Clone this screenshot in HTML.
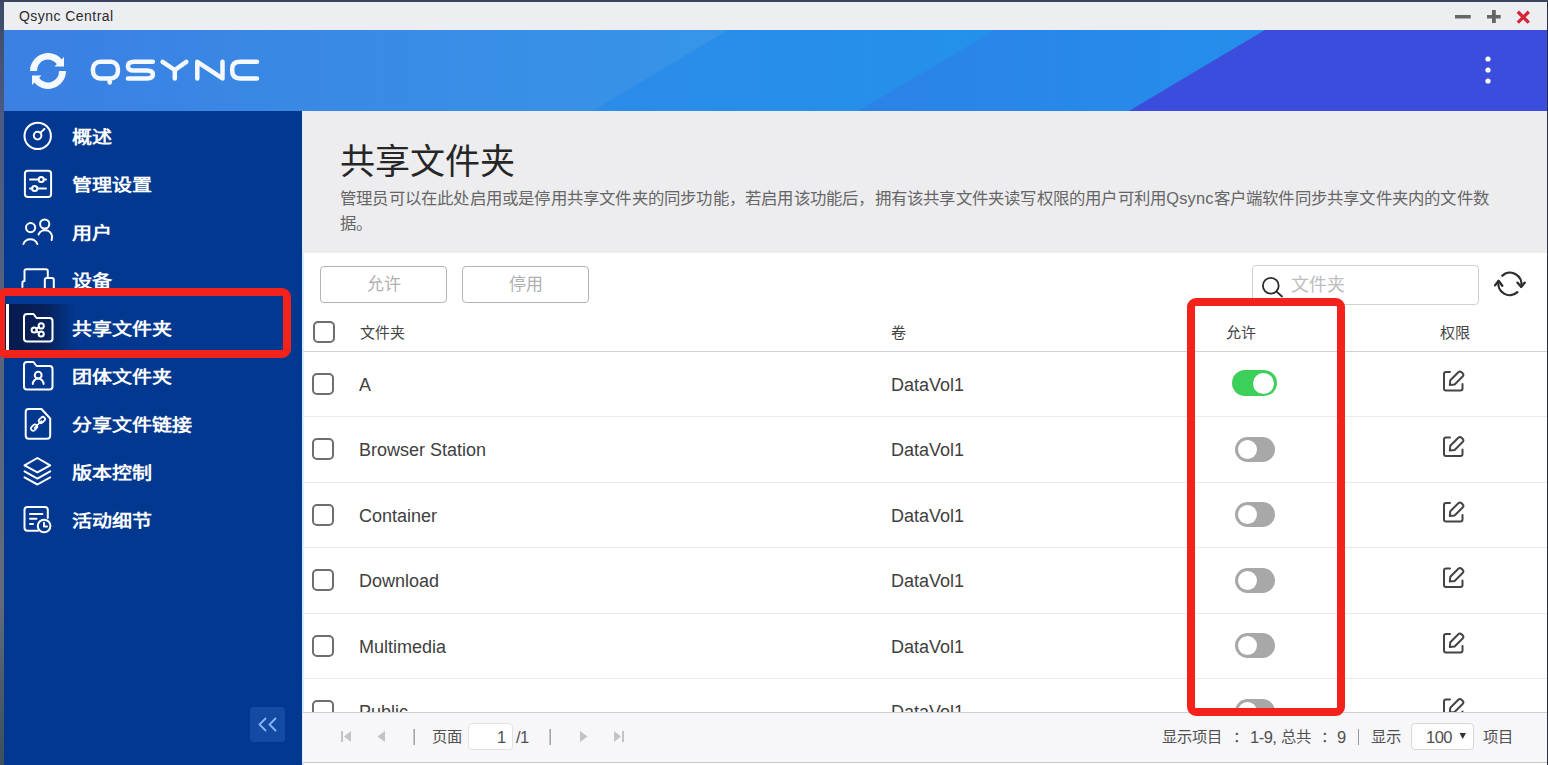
<!DOCTYPE html>
<html lang="zh-CN"><head><meta charset="utf-8">
<style>
*{margin:0;padding:0;box-sizing:border-box}
html,body{width:1548px;height:765px;overflow:hidden;background:#404a68;font-family:"Liberation Sans",sans-serif}
.a{position:absolute}
#titlebar{left:4px;top:2px;width:1543px;height:28px;background:#eceef2}
#header{left:4px;top:30px;width:1543px;height:81px;overflow:hidden}
#sidebar{left:4px;top:111px;width:298px;height:654px;background:#02388f}
#content{left:302px;top:111px;width:1245px;height:654px;background:#fff}
#phead{left:303px;top:111px;width:1244px;height:142px;background:#ededef}
.lbl{position:absolute;left:72px;color:#fff;font-weight:bold;font-size:20px;line-height:24px;white-space:nowrap;transform:scaleY(.87);transform-origin:0 20px}
.ico{position:absolute;left:20px}
.th{position:absolute;font-size:15px;color:#444;line-height:18px;white-space:nowrap}
.cell{position:absolute;font-size:18px;color:#404040;line-height:22px;white-space:nowrap;margin-top:1px}
.cb{position:absolute;left:312px;width:22px;height:22px;border:2px solid #6e6e6e;border-radius:5px;background:#fff}
.tog{position:absolute;left:1235px;width:40px;height:25px;border-radius:13px;background:#a8a8a8}
.tog::after{content:"";position:absolute;left:3px;top:3px;width:19px;height:19px;border-radius:50%;background:#fff}
.tog.on{left:1232px;width:45px;height:26px;background:#3ccf5a}
.tog.on::after{left:21px;top:2.5px;width:21px;height:21px}
.rl{position:absolute;left:303px;width:1244px;height:1px;background:#ebebeb}
.ed{position:absolute;left:1441px}
.ft{position:absolute;font-size:15.3px;color:#505050;line-height:18px;white-space:nowrap}
</style></head>
<body>
<div class="a" style="left:0;top:0;width:4px;height:765px;background:linear-gradient(180deg,#3d4a66 0%,#4a5a82 15%,#58627c 45%,#646b7d 78%,#4a5868 92%,#3d4f5a 100%)"></div>
<div id="titlebar" class="a"></div>
<div class="a" style="left:19px;top:7.5px;font-size:14px;letter-spacing:0.45px;color:#2a2a2a;line-height:17px">Qsync Central</div>
<svg class="a" style="left:1450px;top:6px" width="90" height="20" viewBox="0 0 90 20">
  <rect x="5" y="9" width="15.7" height="3.5" fill="#666"/>
  <rect x="37" y="9" width="13.7" height="3.5" fill="#666"/>
  <rect x="42" y="4" width="3.8" height="13" fill="#666"/>
  <path d="M67.8,5.8 L78.8,16.6 M78.8,5.8 L67.8,16.6" stroke="#d42636" stroke-width="3.3"/>
</svg>

<!-- header -->
<svg id="header" class="a" width="1543" height="81" viewBox="4 30 1543 81">
  <defs>
    <linearGradient id="g1" x1="4" y1="0" x2="720" y2="0" gradientUnits="userSpaceOnUse"><stop offset="0" stop-color="#3b80e2"/><stop offset="1" stop-color="#3795e8"/></linearGradient>
    <linearGradient id="g2" x1="600" y1="0" x2="990" y2="0" gradientUnits="userSpaceOnUse"><stop offset="0" stop-color="#2b8ce9"/><stop offset="1" stop-color="#2391ea"/></linearGradient>
    <linearGradient id="g3" x1="860" y1="0" x2="1260" y2="0" gradientUnits="userSpaceOnUse"><stop offset="0" stop-color="#2c82e7"/><stop offset="1" stop-color="#258eea"/></linearGradient>
  </defs>
  <rect x="4" y="30" width="1543" height="81" fill="url(#g1)"/>
  <polygon points="728,30 1547,30 1547,111 592,111" fill="url(#g2)"/>
  <polygon points="995,30 1547,30 1547,111 858,111" fill="url(#g3)"/>
  <polygon points="1265,30 1547,30 1547,111 1129,111" fill="#3c4cdc"/>
  <!-- sync icon -->
  <g fill="#f4f9ff">
    <path d="M30,71 A18,18 0 0 1 62.7,60.7 L57.2,64.5 A11,11 0 0 0 37,71 Z"/>
    <polygon points="64,57 64,66.6 54.5,66.6"/>
    <path d="M66,71 A18,18 0 0 1 33.3,81.3 L38.8,77.5 A11,11 0 0 0 59,71 Z"/>
    <polygon points="32,85 32,75.4 41.5,75.4"/>
  </g>
  <g fill="none" stroke="#f4f9ff" stroke-width="4.5" stroke-linecap="round" stroke-linejoin="round">
    <rect x="93" y="61.8" width="24.9" height="16.6" rx="7"/>
    <path d="M109.7,80.5 V82.6"/>
    <path d="M152.9,61.8 H134 Q127.9,61.8 127.9,66.2 Q127.9,70.6 134,70.6 H147 Q152.9,70.6 152.9,74.5 Q152.9,78.4 147,78.4 H127.9"/>
    <path d="M162.6,61.8 L174.8,70 L186.3,61.8 M174.8,70 V78.4"/>
    <path d="M197.3,78.4 V61.8 L222.5,78.4 V61.8"/>
    <path d="M257,61.8 H240 Q232.2,61.8 232.2,69 V71 Q232.2,78.4 240,78.4 H257"/>
  </g>
  <g fill="#fff">
    <circle cx="1488" cy="59" r="2.6"/>
    <circle cx="1488" cy="70" r="2.6"/>
    <circle cx="1488" cy="81" r="2.6"/>
  </g>
</svg>

<div id="sidebar" class="a"></div>
<!-- active item -->
<div class="a" style="left:4px;top:304px;width:298px;height:48px;background:linear-gradient(90deg,#061a4c 0%,#08215a 14%,#052d77 19%,#02388f 24%)"></div>
<div class="a" style="left:6px;top:304px;width:3px;height:48px;background:#fff"></div>

<div class="lbl" style="top:124px">概述</div>
<div class="lbl" style="top:172px">管理设置</div>
<div class="lbl" style="top:220px">用户</div>
<div class="lbl" style="top:268px">设备</div>
<div class="lbl" style="top:316px">共享文件夹</div>
<div class="lbl" style="top:364px">团体文件夹</div>
<div class="lbl" style="top:412px">分享文件链接</div>
<div class="lbl" style="top:460px">版本控制</div>
<div class="lbl" style="top:508px">活动细节</div>

<svg class="a" style="left:0;top:111px" width="70" height="440" viewBox="0 111 70 440" fill="none" stroke="#fff" stroke-width="2" stroke-linecap="round" stroke-linejoin="round">
  <!-- overview -->
  <circle cx="37.7" cy="135.9" r="13.2"/>
  <circle cx="37.6" cy="135.6" r="3.8"/>
  <path d="M40.4,132.8 L44.4,129"/>
  <!-- settings -->
  <rect x="24.9" y="170.7" width="26.2" height="26.3" rx="3"/>
  <path d="M30,179.5 H38.6 M43.8,179.5 H46 M30,188.5 H32.2 M37.3,188.5 H46"/>
  <circle cx="41.2" cy="179.5" r="2.6"/>
  <circle cx="34.7" cy="188.5" r="2.6"/>
  <!-- users -->
  <circle cx="30.6" cy="227.6" r="4.6"/>
  <circle cx="44.7" cy="224" r="4.6"/>
  <path d="M23.4,244 A7.4,7.4 0 0 1 37.3,244"/>
  <path d="M38.5,234.5 A7,7 0 0 1 51.6,240"/>
  <!-- devices -->
  <path d="M22.4,287 V283 Q22.4,281 24.5,281 H24.5 V271 Q24.5,269.2 26.5,269.2 H45.8 Q47.8,269.2 47.8,271 V278"/>
  <rect x="44.8" y="278" width="9" height="14" rx="2"/>
  <!-- shared folder -->
  <path d="M24,317 Q24,314 27,314 H33.5 L36.5,318 H49.5 Q52.5,318 52.5,321 V338.5 Q52.5,341.5 49.5,341.5 H27 Q24,341.5 24,338.5 Z"/>
  <circle cx="34.2" cy="330" r="2.6"/>
  <circle cx="41.2" cy="325.9" r="2.6"/>
  <circle cx="41.2" cy="334" r="2.6"/>
  <path d="M36.2,328.8 L39.2,327 M36.2,331.2 L39.2,332.9"/>
  <!-- group folder -->
  <path d="M24,365 Q24,362 27,362 H33.5 L36.5,366 H49.5 Q52.5,366 52.5,369 V386.5 Q52.5,389.5 49.5,389.5 H27 Q24,389.5 24,386.5 Z"/>
  <circle cx="38.2" cy="375.2" r="3.4"/>
  <path d="M32.8,384 A5.4,5.4 0 0 1 43.6,384"/>
  <!-- link file -->
  <path d="M28.5,409 H41.5 L50.2,418.5 V435.5 Q50.2,438.7 47,438.7 H28.8 Q25.7,438.7 25.7,435.5 V412 Q25.7,409 28.5,409 Z"/>
  <path d="M34.5,428 L41.5,421" stroke-width="1.6"/>
  <rect x="30.6" y="425.4" width="7" height="4.4" rx="2.2" transform="rotate(-45 34.1 427.6)" stroke-width="1.8"/>
  <rect x="38.4" y="417.8" width="7" height="4.4" rx="2.2" transform="rotate(-45 41.9 420)" stroke-width="1.8"/>
  <!-- layers -->
  <path d="M37.4,458 L50.2,465.3 L37.4,472.4 L24.5,465.3 Z"/>
  <path d="M24.5,471.3 L37.4,478.6 L50.2,471.3"/>
  <path d="M24.5,477.4 L37.4,484.5 L50.2,477.4"/>
  <!-- activity -->
  <path d="M38,530.8 H27.5 Q24.5,530.8 24.5,527.8 V509.9 Q24.5,506.9 27.5,506.9 H44.8 Q47.8,506.9 47.8,509.9 V518"/>
  <path d="M30,514 H42.4 M30,518.8 H36.5 M30,524 H33"/>
  <circle cx="44.1" cy="526" r="6.3"/>
  <path d="M44,522.8 V526.4 H47"/>
</svg>

<!-- collapse button -->
<div class="a" style="left:250px;top:707px;width:35px;height:35px;border-radius:4px;background:#134aa3"></div>
<svg class="a" style="left:250px;top:707px" width="35" height="35" viewBox="0 0 35 35" fill="none" stroke="#8bb4f5" stroke-width="1.8" stroke-linecap="round">
  <path d="M15.5,11.5 L9.5,17.5 L15.5,23.5 M25.5,11.5 L19.5,17.5 L25.5,23.5"/>
</svg>

<div id="content" class="a"></div>
<div class="a" style="left:302px;top:111px;width:2px;height:654px;background:#d8eefa"></div>
<div id="phead" class="a"></div>
<div class="a" style="left:340px;top:140px;font-size:35.1px;color:#262626;line-height:44px;white-space:nowrap">共享文件夹</div>
<div class="a" style="left:340px;top:186px;font-size:16.4px;letter-spacing:0.2px;color:#666;line-height:25px;white-space:nowrap">管理员可以在此处启用或是停用共享文件夹的同步功能，若启用该功能后，拥有该共享文件夹读写权限的用户可利用Qsync客户端软件同步共享文件夹内的文件数<br>据。</div>

<!-- toolbar -->
<div class="a" style="left:320px;top:266px;width:127px;height:37px;border:1px solid #b4b4b4;border-radius:4px;color:#b0b0b0;font-size:17px;line-height:35px;text-align:center">允许</div>
<div class="a" style="left:462px;top:266px;width:127px;height:37px;border:1px solid #b4b4b4;border-radius:4px;color:#b0b0b0;font-size:17px;line-height:35px;text-align:center">停用</div>
<div class="a" style="left:1252px;top:265px;width:227px;height:40px;border:1px solid #d0d0d0;border-radius:4px;background:#fff"></div>
<svg class="a" style="left:1258px;top:274px" width="30" height="26" viewBox="0 0 30 26" fill="none" stroke="#2a2a2a" stroke-width="1.8" stroke-linecap="round">
  <circle cx="12.8" cy="11.7" r="7.9"/>
  <path d="M18.6,17.6 L24,22.5"/>
</svg>
<div class="a" style="left:1291px;top:274px;font-size:18px;color:#bdbdbd;line-height:22px">文件夹</div>
<svg class="a" style="left:1485px;top:260px" width="50" height="50" viewBox="1485 260 50 50" fill="none" stroke="#2e2e2e" stroke-width="2.3" stroke-linecap="round" stroke-linejoin="round">
  <path d="M1502.3,275.7 A11.4,11.4 0 0 1 1521.2,286.5"/>
  <path d="M1517.4,282.6 L1521.2,287 L1524.8,282.6"/>
  <path d="M1517.4,292.2 A11.4,11.4 0 0 1 1498.6,281.3"/>
  <path d="M1495,285.4 L1498.6,280.8 L1502.3,285.8"/>
</svg>

<!-- table header -->
<div class="cb" style="left:313px;top:321px"></div>
<div class="th" style="left:360px;top:324px">文件夹</div>
<div class="th" style="left:891px;top:324px">卷</div>
<div class="th" style="left:1226px;top:324px">允许</div>
<div class="th" style="left:1440px;top:324px">权限</div>
<div class="a" style="left:303px;top:351px;width:1244px;height:1px;background:#d3d3d3"></div>

<!-- rows -->
<div class="rl" style="top:416px"></div>
<div class="rl" style="top:482px"></div>
<div class="rl" style="top:547px"></div>
<div class="rl" style="top:613px"></div>
<div class="rl" style="top:678px"></div>

<div class="cb" style="top:373px"></div>
<div class="cb" style="top:438px"></div>
<div class="cb" style="top:504px"></div>
<div class="cb" style="top:569px"></div>
<div class="cb" style="top:635px"></div>
<div class="cb" style="top:700px"></div>

<div class="cell" style="left:359px;top:373px">A</div>
<div class="cell" style="left:359px;top:438px">Browser Station</div>
<div class="cell" style="left:359px;top:504px">Container</div>
<div class="cell" style="left:359px;top:569px">Download</div>
<div class="cell" style="left:359px;top:635px">Multimedia</div>
<div class="cell" style="left:359px;top:700px">Public</div>

<div class="cell" style="left:891px;top:373px">DataVol1</div>
<div class="cell" style="left:891px;top:438px">DataVol1</div>
<div class="cell" style="left:891px;top:504px">DataVol1</div>
<div class="cell" style="left:891px;top:569px">DataVol1</div>
<div class="cell" style="left:891px;top:635px">DataVol1</div>
<div class="cell" style="left:891px;top:700px">DataVol1</div>

<div class="tog on" style="top:370px"></div>
<div class="tog" style="top:437px"></div>
<div class="tog" style="top:502px"></div>
<div class="tog" style="top:568px"></div>
<div class="tog" style="top:633px"></div>
<div class="tog" style="top:699px"></div>

<svg class="a" style="left:1436px;top:364px" width="34" height="350" viewBox="1436 364 34 350" fill="none" stroke="#444" stroke-width="2" stroke-linecap="round" stroke-linejoin="round">
  <g id="ed1">
    <path d="M1450,372 H1446 Q1444,372 1444,374 V388.5 Q1444,390.5 1446,390.5 H1460.5 Q1462.5,390.5 1462.5,388.5 V384"/>
    <path d="M1449.8,385 L1450.3,380.2 L1458.3,372.2 Q1459.9,370.6 1461.5,372.2 L1462.6,373.3 Q1464.2,374.9 1462.6,376.5 L1454.6,384.5 Z"/>
  </g>
  <use href="#ed1" y="65.5"/>
  <use href="#ed1" y="131"/>
  <use href="#ed1" y="196.5"/>
  <use href="#ed1" y="262"/>
  <use href="#ed1" y="327.5"/>
</svg>

<!-- footer -->
<div class="a" style="left:303px;top:712px;width:1244px;height:51px;background:#f7f7f9;border-top:1px solid #cfcfcf;border-bottom:1px solid #c8c8c8"></div>
<svg class="a" style="left:330px;top:720px" width="310" height="35" viewBox="330 720 310 35" fill="#c3c3c3">
  <rect x="341" y="731" width="2" height="11"/>
  <polygon points="351,731 351,742 344,736.5"/>
  <polygon points="385,731 385,742 377.5,736.5"/>
  <polygon points="580,731 580,742 587.5,736.5"/>
  <polygon points="614,731 614,742 621,736.5"/>
  <rect x="622" y="731" width="2" height="11"/>
  <rect x="413.5" y="729" width="1.4" height="16" fill="#999"/>
  <rect x="549.5" y="729" width="1.4" height="16" fill="#999"/>
</svg>
<div class="ft" style="left:432px;top:728px">页面</div>
<div class="a" style="left:468px;top:723px;width:45px;height:27px;border:1px solid #e3e3e3;border-radius:4px;background:#fff"></div>
<div class="ft" style="left:497px;top:728px;font-size:16.5px;letter-spacing:-0.5px">1</div>
<div class="ft" style="left:516px;top:728px;font-size:16.5px;letter-spacing:-0.5px">/1</div>

<div class="ft" style="left:1162px;top:728px">显示项目</div>
<div class="ft" style="left:1233px;top:728px">：</div>
<div class="ft" style="left:1250px;top:728px;font-size:16.5px;letter-spacing:-0.5px">1-9,</div>
<div class="ft" style="left:1281px;top:728px">总共</div>
<div class="ft" style="left:1321px;top:728px">：</div>
<div class="ft" style="left:1337px;top:728px;font-size:16.5px;letter-spacing:-0.5px">9</div>
<div class="a" style="left:1357.5px;top:729px;width:1.4px;height:16px;background:#999"></div>
<div class="ft" style="left:1371px;top:728px">显示</div>
<div class="a" style="left:1411px;top:723px;width:63px;height:27px;border:1px solid #d8d8d8;border-radius:4px;background:#fff"></div>
<div class="ft" style="left:1426px;top:728px;font-size:16.5px;letter-spacing:-0.5px">100</div>
<svg class="a" style="left:1459px;top:732px" width="8" height="8" viewBox="0 0 8 8"><polygon points="0.5,1 7,1 3.75,7" fill="#333"/></svg>
<div class="ft" style="left:1483px;top:728px">项目</div>

<!-- red annotation boxes -->
<div class="a" style="left:-3px;top:288px;width:294px;height:70px;border:8px solid #f3231c;border-radius:9px"></div>
<div class="a" style="left:1187px;top:298px;width:158px;height:418px;border:8px solid #f3231c;border-radius:9px"></div>

<!-- window border right -->
<div class="a" style="left:1547px;top:0;width:1px;height:765px;background:#2a3040"></div>
<div class="a" style="left:0;top:0;width:1548px;height:2px;background:#3b4560"></div>
</body></html>
